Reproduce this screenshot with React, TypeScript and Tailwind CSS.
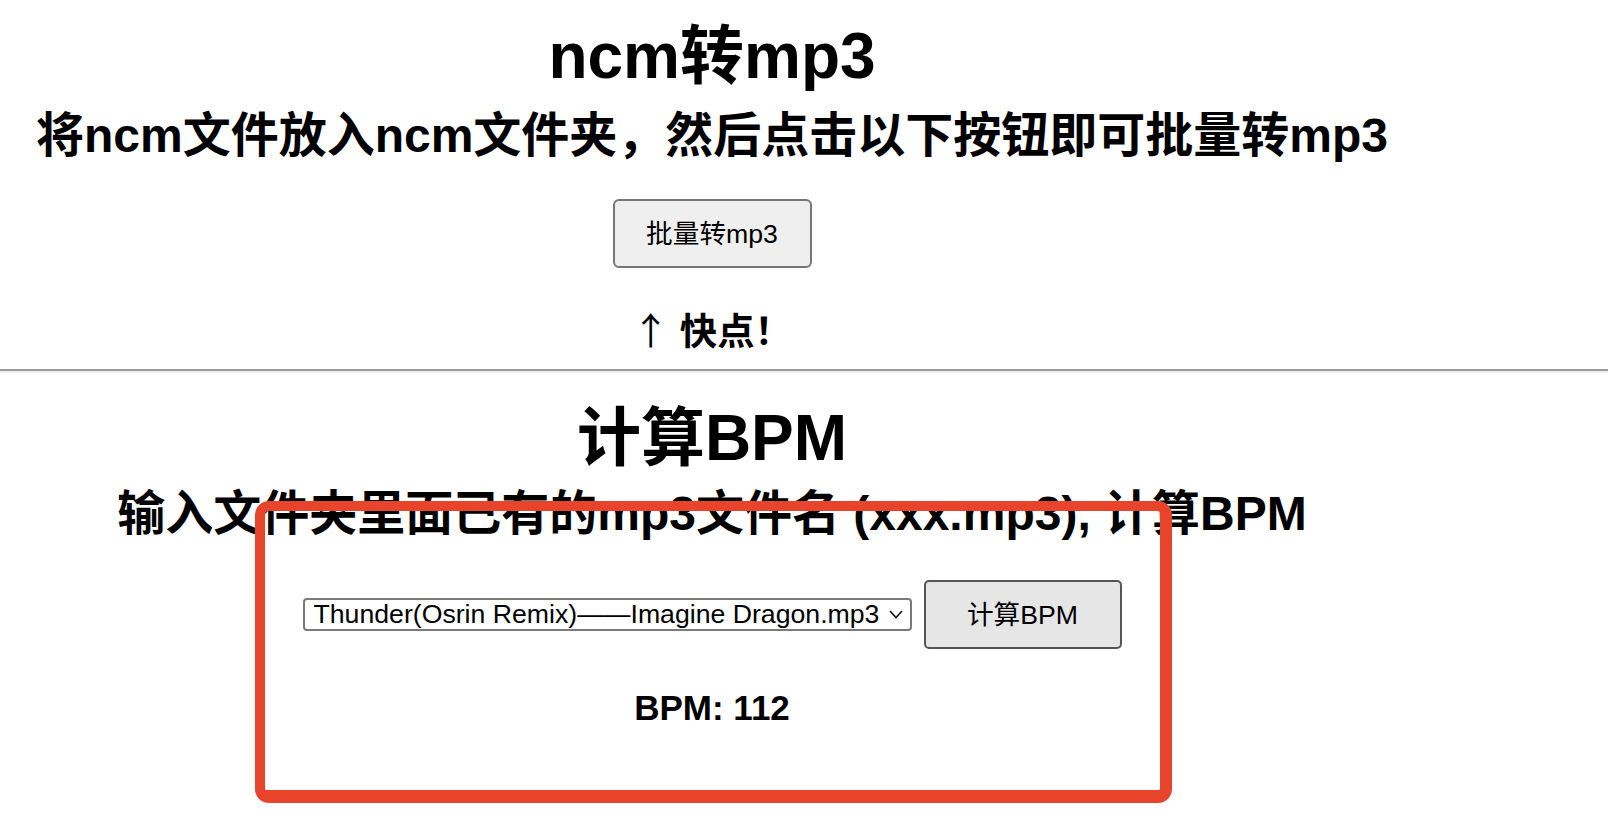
import React, { useState } from 'react';

const files = [
    'Thunder(Osrin Remix)——Imagine Dragon.mp3',
];

const App: React.FC = () => {
    const [file, setFile] = useState(files[0]);
    const [bpm] = useState<number | null>(112);

    return (
        <div className="relative min-h-[826px] bg-white text-black font-['Liberation_Sans','Noto_Sans_CJK_SC',sans-serif]">
            <div className="w-[1424px] text-center">
                <h1 className="pt-[24px] text-[64px] leading-[64px] font-bold">ncm转mp3</h1>
                <h2 className="mt-[24px] text-[48px] leading-[48px] font-bold">
                    将ncm文件放入ncm文件夹，然后点击以下按钮即可批量转mp3
                </h2>
                <div className="mt-[39px] flex justify-center">
                    <button className="w-[199px] h-[69px] rounded-[6px] border-2 border-[#767676] bg-[#efefef] text-[26.67px]">
                        批量转mp3
                    </button>
                </div>
                <h3 className="mt-[43px] text-[37.44px] leading-[37.44px] font-bold">
                    <span className="font-['Noto_Sans_CJK_SC',sans-serif] font-normal">↑</span> 快点！
                </h3>
            </div>

            <hr className="mt-[18px] border-t-2 border-b-2 border-t-[#9a9a9a] border-b-[#eeeeee]" />

            <div className="w-[1424px] text-center">
                <h1 className="mt-[33px] text-[64px] leading-[64px] font-bold">计算BPM</h1>
                <h2 className="mt-[20px] text-[48px] leading-[48px] font-bold">
                    输入文件夹里面已有的mp3文件名 (xxx.mp3), 计算BPM
                </h2>
                <div className="mt-[42px] flex items-center justify-center gap-[12px]">
                    <div className="relative">
                        <select
                            value={file}
                            onChange={(e) => setFile(e.target.value)}
                            className="appearance-none w-[609px] h-[33px] pl-[9px] pr-[30px] rounded-[4px] border-2 border-[#7a7a7a] bg-white text-[26.67px] leading-[29px] text-left"
                        >
                            {files.map(f => (
                                <option key={f} value={f}>{f}</option>
                            ))}
                        </select>
                        <svg className="absolute right-[9px] top-[12px] pointer-events-none" width="14" height="9" viewBox="0 0 14 9">
                            <polyline points="1,1 7,7.5 13,1" fill="none" stroke="#111" strokeWidth="1.6" />
                        </svg>
                    </div>
                    <button className="w-[198px] h-[69px] rounded-[5px] border-2 border-[#555555] bg-[#e6e6e6] text-[26.67px]">
                        计算BPM
                    </button>
                </div>
                {bpm !== null && (
                    <p className="mt-[41px] text-[35px] leading-[35px] font-bold">BPM: {bpm}</p>
                )}
            </div>

            {/* annotation box */}
            <div className="absolute left-[255px] top-[501px] w-[917px] h-[302px] rounded-[14px] border-[#e8432b] border-t-[10px] border-l-[10px] border-r-[12px] border-b-[13px] pointer-events-none" />
        </div>
    );
};

export default App;
